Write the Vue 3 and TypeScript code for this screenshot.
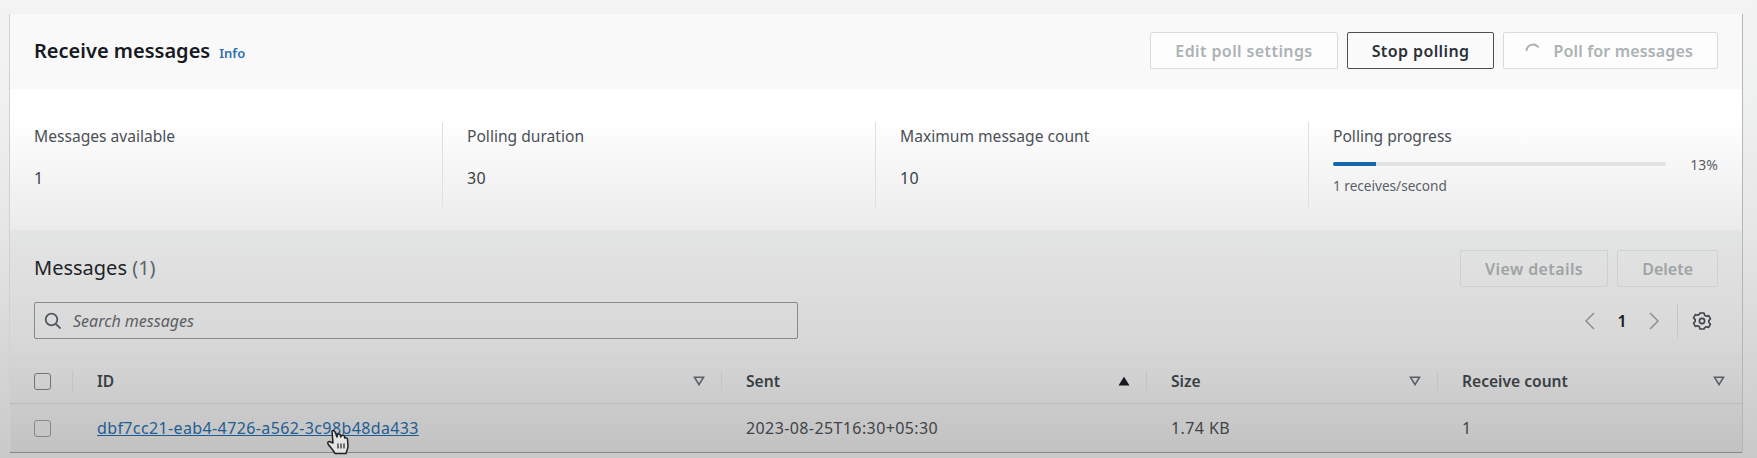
<script setup lang="ts">
const stats = [
  { label: 'Messages available', value: '1' },
  { label: 'Polling duration', value: '30' },
  { label: 'Maximum message count', value: '10' },
]
const progress = 13
</script>

<template>
  <div class="page">
    <section class="card">
      <header class="head">
        <div class="title-wrap">
          <h1>Receive messages</h1>
          <a class="info">Info</a>
        </div>
        <div class="actions">
          <button class="btn off">Edit poll settings</button>
          <button class="btn on">Stop polling</button>
          <button class="btn off poll">
            <svg width="16" height="16" viewBox="0 0 16 16" fill="none">
              <path d="M1.5 8a6.5 6.5 0 0 1 12-3.4" stroke="#a9b0b3" stroke-width="1.8" />
            </svg>
            Poll for messages
          </button>
        </div>
      </header>

      <div class="stats">
        <div v-for="s in stats" :key="s.label" class="stat">
          <div class="label">{{ s.label }}</div>
          <div class="value">{{ s.value }}</div>
        </div>
        <div class="stat">
          <div class="label">Polling progress</div>
          <div class="progress-row">
            <div class="track"><div class="fill" :style="{ width: progress + '%' }"></div></div>
            <span class="pct">{{ progress }}%</span>
          </div>
          <div class="rate">1 receives/second</div>
        </div>
      </div>

      <div class="lower">
        <div class="tools">
          <h2>Messages <span>(1)</span></h2>
          <div class="actions">
            <button class="btn off dim">View details</button>
            <button class="btn off dim del">Delete</button>
          </div>
        </div>

        <div class="filter-row">
          <div class="search">
            <svg width="18" height="18" viewBox="0 0 18 18" fill="none" stroke="#4f5760" stroke-width="1.8">
              <circle cx="7.5" cy="7.5" r="5.8" />
              <path d="M11.8 11.8 16.5 16.5" />
            </svg>
            <input type="text" placeholder="Search messages" />
          </div>
          <div class="pager">
            <svg width="14" height="20" viewBox="0 0 14 20" fill="none" stroke="#8c9194" stroke-width="1.5">
              <path d="M11 2 3 10l8 8" />
            </svg>
            <b>1</b>
            <svg width="14" height="20" viewBox="0 0 14 20" fill="none" stroke="#8c9194" stroke-width="1.5">
              <path d="m3 2 8 8-8 8" />
            </svg>
            <i class="sep"></i>
            <svg width="20" height="20" viewBox="0 0 20 20" fill="none" stroke="#3f4549" stroke-width="1.6" stroke-linejoin="round">
              <path d="M8 2h4l.7 2.3 1.6.9 2.4-.6 1.8 3.2-1.7 1.8v1.8l1.7 1.8-1.8 3.2-2.4-.6-1.6.9L12 18H8l-.7-2.3-1.6-.9-2.4.6-1.8-3.2 1.7-1.8V8.6L1.5 6.8l1.8-3.2 2.4.6 1.6-.9z" />
              <circle cx="10" cy="10" r="2.6" />
            </svg>
          </div>
        </div>

        <div class="grid thead">
          <div class="cell check"><span class="box"></span></div>
          <div class="cell">ID<svg class="sort" viewBox="0 0 12 10"><path d="M1.5 1.2h9L6 8.6z" /></svg></div>
          <div class="cell">Sent<svg class="sort solid" viewBox="0 0 12 10"><path d="M6 .8 11.5 9.5H.5z" /></svg></div>
          <div class="cell">Size<svg class="sort" viewBox="0 0 12 10"><path d="M1.5 1.2h9L6 8.6z" /></svg></div>
          <div class="cell last">Receive count<svg class="sort" viewBox="0 0 12 10"><path d="M1.5 1.2h9L6 8.6z" /></svg></div>
        </div>
        <div class="grid tbody">
          <div class="cell check"><span class="box"></span></div>
          <div class="cell"><a class="msg-link">dbf7cc21-eab4-4726-a562-3c98b48da433</a></div>
          <div class="cell">2023-08-25T16:30+05:30</div>
          <div class="cell">1.74 KB</div>
          <div class="cell">1</div>
        </div>
      </div>

      <!-- mouse pointer from the recording -->
      <svg class="pointer" width="28" height="26" viewBox="0 0 28 26" fill="none" stroke="#222" stroke-width="1.5" stroke-linejoin="round">
        <path d="M7 2c1.500-1 3 0 3.500 2l1.500 4 .5-2.500c1.500-1 3-.5 3 1l.3 1.500.7-1.500c1.500-.8 2.800-.2 3 1l.3 1.500c1.200-.6 2.500 0 2.700 1.200l.5 7c0 2.500-1.500 5-2 7.300H10c-1-2.500-4-5.500-7-9.500-.8-1.500.5-3 2-2.300L8 14z" fill="rgba(235,235,235,0.85)" />
        <path d="M13 14.500v5M16 14.500v5M19 14.500v5" stroke-width="1.200" />
      </svg>
    </section>
  </div>
</template>

<style>
html,
body {
  margin: 0;
}
</style>

<style scoped>
.page {
  height: 458px;
  overflow: hidden;
  box-sizing: border-box;
  padding: 14px 15px 0 10px;
  background: linear-gradient(180deg, #f3f3f3 0, #f0f1f1 90px, #e6e6e6 230px, #c9c9c9 458px);
  font-family: "Noto Sans", "Liberation Sans", sans-serif;
  color: #2e3338;
}

.card {
  position: relative;
  width: 1732px;
  height: 438px;
  box-shadow: -1px 0 0 #cfd0d0, 1px 0 0 #b4b6b6, 0 1px 0 #85888a;
}

.head {
  height: 75px;
  box-sizing: border-box;
  padding: 18px 24px 0;
  display: flex;
  justify-content: space-between;
  align-items: flex-start;
  background: #f9f9fa;
}

.title-wrap {
  display: flex;
  align-items: baseline;
  gap: 9px;
  line-height: 38px;
}

h1 {
  margin: 0;
  font-size: 20px;
  font-weight: 600;
  color: #16191f;
}

.info {
  font-size: 13px;
  font-weight: 600;
  color: #2f6fb0;
}

.actions {
  display: flex;
  gap: 9px;
}

.btn {
  height: 37px;
  box-sizing: border-box;
  padding: 0 24px;
  border-radius: 2px;
  font-family: inherit;
  font-size: 16px;
  font-weight: 600;
  letter-spacing: 0.4px;
  display: flex;
  align-items: center;
  white-space: nowrap;
}

.btn.off {
  background: #fdfdfd;
  border: 1px solid #d9dcdd;
  color: #abb2b4;
}

.btn.on {
  background: #fbfbfb;
  border: 1px solid #4a4f55;
  color: #2b3036;
}

.btn.poll {
  gap: 12px;
  padding-left: 21px;
  letter-spacing: 0.15px;
}

.btn.dim {
  background: transparent;
  border-color: #cfd1d1;
  color: #9ea3a4;
}

.btn.del {
  letter-spacing: 0;
}

.stats {
  height: 141px;
  box-sizing: border-box;
  padding-top: 33px;
  display: grid;
  grid-template-columns: repeat(4, 1fr);
  background: linear-gradient(180deg, #ffffff 0, #ffffff 30px, #ebebec 141px);
}

.stat {
  height: 85px;
  box-sizing: border-box;
  padding-left: 24px;
  border-right: 1px solid #dfe0e1;
  font-size: 15.6px;
  color: #4a5057;
}

.stat:last-child {
  border-right: 0;
  padding-right: 24px;
}

.label {
  line-height: 28px;
}

.value {
  margin-top: 14px;
  line-height: 28px;
  font-size: 16px;
  letter-spacing: 0.4px;
  color: #3a3f44;
}

.progress-row {
  display: flex;
  align-items: center;
  gap: 24px;
  margin-top: 5px;
  height: 18px;
}

.track {
  flex: 1;
  height: 4px;
  border-radius: 2px;
  background: #e1e2e3;
  overflow: hidden;
}

.fill {
  height: 100%;
  background: #1565a8;
}

.pct {
  font-size: 14px;
  color: #5a6066;
}

.rate {
  margin-top: 3px;
  font-size: 13.6px;
  line-height: 20px;
  color: #5a6066;
}

.lower {
  height: 222px;
  box-sizing: border-box;
  padding-top: 20px;
  background: linear-gradient(180deg, #e3e4e4 0, #d8d8d8 110px, #c2c2c2 222px);
}

.tools,
.filter-row {
  display: flex;
  justify-content: space-between;
  padding: 0 24px;
}

h2 {
  margin: 0;
  font-size: 20px;
  font-weight: 400;
  line-height: 36px;
  color: #1f2327;
}

h2 span {
  color: #5f6468;
}

.filter-row {
  margin-top: 15px;
  height: 37px;
  align-items: center;
}

.search {
  width: 764px;
  height: 37px;
  box-sizing: border-box;
  padding-left: 9px;
  display: flex;
  align-items: center;
  gap: 11px;
  border: 1.5px solid #858a8f;
  border-radius: 2px;
}

.search input {
  flex: 1;
  min-width: 0;
  border: 0;
  outline: 0;
  padding: 0;
  background: transparent;
  font-family: inherit;
  font-size: 16px;
  font-style: italic;
}

.search input::placeholder {
  color: #5b6065;
  opacity: 1;
}

.pager {
  display: flex;
  align-items: center;
  padding-right: 6px;
}

.pager b {
  width: 50px;
  text-align: center;
  font-size: 16px;
  font-weight: 600;
  color: #16191f;
}

.sep {
  width: 1px;
  height: 34px;
  margin: 0 14px 0 16px;
  background: #c6c7c7;
}

.grid {
  display: grid;
  grid-template-columns: 63px 649px 425px 291px 1fr;
}

.thead {
  margin-top: 19px;
  height: 46px;
  border-top: 1px solid #cdcecf;
  border-bottom: 1px solid #b9babb;
  box-sizing: border-box;
  font-size: 15.6px;
  font-weight: 600;
  color: #3a3f44;
}

.tbody {
  height: 48px;
  font-size: 16px;
  letter-spacing: 0.4px;
  color: #3f4448;
}

.cell {
  display: flex;
  align-items: center;
  justify-content: space-between;
  padding: 0 17px 0 24px;
  min-width: 0;
}

.thead .cell {
  position: relative;
}

.thead .cell:not(.last)::after {
  content: "";
  position: absolute;
  right: 0;
  top: 12px;
  bottom: 12px;
  width: 1px;
  background: #c3c4c5;
}

.cell.check {
  padding: 0 0 0 24px;
}

.box {
  width: 15px;
  height: 15px;
  border: 1.5px solid #6f7478;
  border-radius: 3px;
}

.tbody .box {
  border-color: #85898c;
}

.sort {
  width: 12px;
  height: 10px;
  flex: none;
  fill: none;
  stroke: #5a6065;
  stroke-width: 1.6;
}

.sort.solid {
  fill: #16191f;
  stroke: none;
}

.msg-link {
  color: #1f5c92;
  text-decoration: underline;
  white-space: nowrap;
  letter-spacing: 0.38px;
}

.pointer {
  position: absolute;
  left: 315px;
  top: 415px;
}
</style>
